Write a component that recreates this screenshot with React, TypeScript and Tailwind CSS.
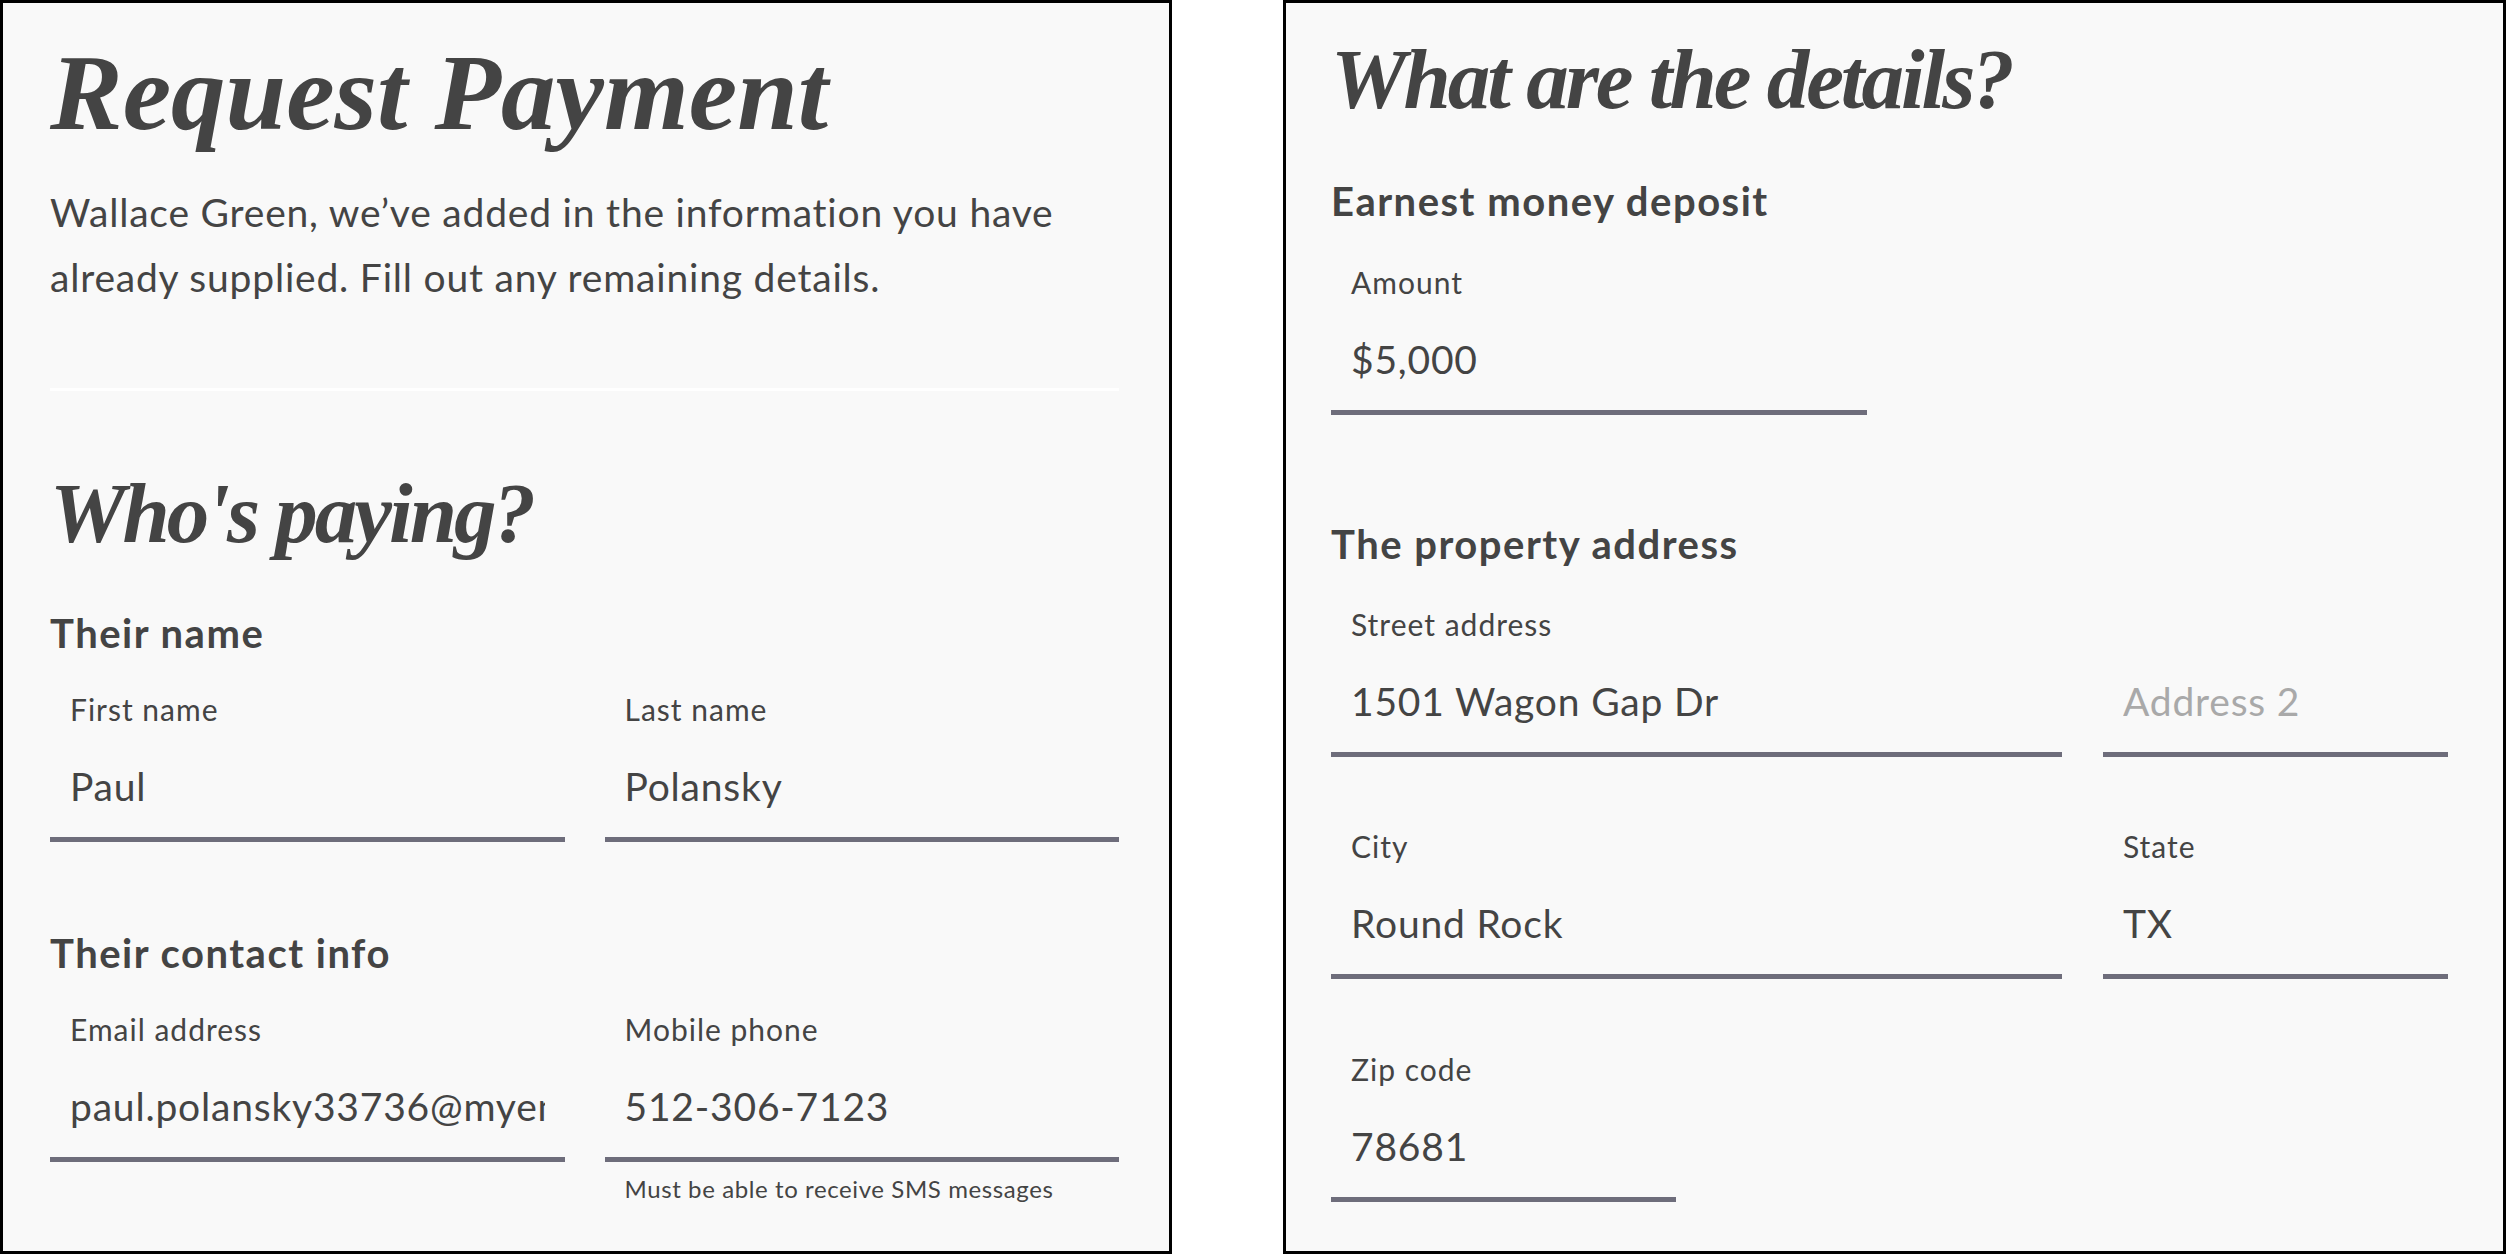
import React from "react";

// Underlined text field: small label on top, value below, thick rule at the bottom
type FieldProps = {
  label?: string;
  value?: string;
  placeholder?: string;
  helper?: string;
  className?: string;
};

function Field({ label, value, placeholder, helper, className = "" }: FieldProps) {
  return (
    <div className={className}>
      <div className="border-b-[5px] border-[#6e6d7b] px-5 pb-[26px]">
        <div className="h-[36px] text-[30px] leading-[34px] tracking-[1px] text-[#444]">{label ?? "\u00a0"}</div>
        <div className="mt-[33px] overflow-hidden whitespace-nowrap text-[39px] leading-[50px] tracking-[0.8px]">
          {value ? (
            <span className="text-[#444]">{value}</span>
          ) : (
            <span className="text-[#a9a9a9]">{placeholder}</span>
          )}
        </div>
      </div>
      {helper && (
        <div className="mt-[12px] px-5 text-[24px] leading-[30px] tracking-[0.6px] text-[#444]">{helper}</div>
      )}
    </div>
  );
}

function SectionTitle({ children, className = "" }: { children: React.ReactNode; className?: string }) {
  return (
    <h3 className={`text-[40px] font-bold leading-[50px] tracking-[1.5px] text-[#444] ${className}`}>{children}</h3>
  );
}

export default function App() {
  return (
    <div className="flex min-h-[1256px] items-start gap-[111px] bg-white font-['Lato','Noto_Sans',sans-serif] text-[#444]">
      {/* Left card: who's paying */}
      <section className="h-[1254px] w-[1172px] shrink-0 border-[3px] border-black bg-[#f9f9f9] pl-[47px] pr-[50px] pt-[30px]">
        <h1 className="font-['Liberation_Serif',serif] text-[109px] font-bold italic leading-[120px] text-[#444]">
          Request Payment
        </h1>
        <p className="mt-[27px] text-[39px] leading-[65px] tracking-[0.8px]">
          Wallace Green, we’ve added in the information you have already supplied. Fill out any remaining details.
        </p>
        <div className="mt-[78px] h-[3px] bg-white" />

        <h2 className="mt-[72px] font-['Liberation_Serif',serif] text-[85px] font-bold italic leading-[100px] tracking-[-3px]">
          Who's paying?
        </h2>

        <SectionTitle className="mt-[45px]">Their name</SectionTitle>
        <div className="mt-[34px] grid grid-cols-2 gap-[40px]">
          <Field label="First name" value="Paul" />
          <Field label="Last name" value="Polansky" />
        </div>

        <SectionTitle className="mt-[86px]">Their contact info</SectionTitle>
        <div className="mt-[34px] grid grid-cols-2 gap-[40px]">
          <Field label="Email address" value="paul.polansky33736@myemail.com" />
          <Field label="Mobile phone" value="512-306-7123" helper="Must be able to receive SMS messages" />
        </div>
      </section>

      {/* Right card: deposit + property */}
      <section className="h-[1254px] flex-1 border-[3px] border-black bg-[#f9f9f9] pl-[45px] pr-[50px] pt-[26px]">
        <h2 className="font-['Liberation_Serif',serif] text-[85px] font-bold italic leading-[100px] tracking-[-3px]">
          What are the details?
        </h2>

        <SectionTitle className="mt-[47px]">Earnest money deposit</SectionTitle>
        <Field className="mt-[39px] w-[536px]" label="Amount" value="$5,000" />

        <SectionTitle className="mt-[104px]">The property address</SectionTitle>
        <div className="mt-[38px] flex gap-[41px]">
          <Field className="w-[731px]" label="Street address" value="1501 Wagon Gap Dr" />
          <Field className="w-[345px]" placeholder="Address 2" />
        </div>
        <div className="mt-[72px] flex gap-[41px]">
          <Field className="w-[731px]" label="City" value="Round Rock" />
          <Field className="w-[345px]" label="State" value="TX" />
        </div>
        <Field className="mt-[73px] w-[345px]" label="Zip code" value="78681" />
      </section>
    </div>
  );
}
